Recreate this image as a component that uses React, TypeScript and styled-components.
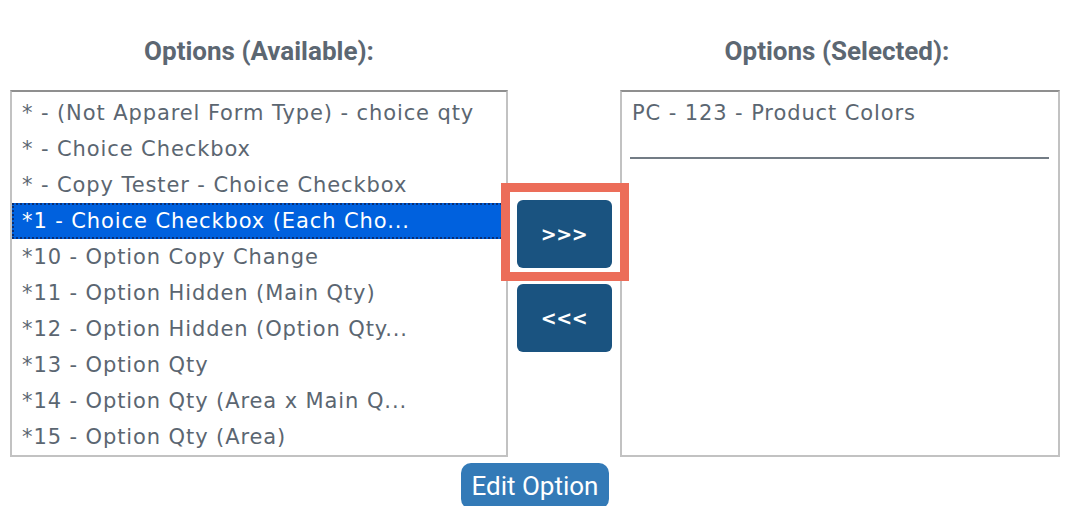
import React from "react";
import styled, { createGlobalStyle } from "styled-components";

const Global = createGlobalStyle`
  html, body { margin: 0; padding: 0; background: #ffffff; }
  body { font-family: "DejaVu Sans", Verdana, sans-serif; overflow: hidden; }
`;

const Page = styled.div`
  width: 1084px;
  height: 506px;
  padding-left: 10px;
  box-sizing: border-box;
  display: flex;
  flex-direction: column;
  align-items: flex-start;
`;

const Grid = styled.div`
  display: grid;
  grid-template-columns: 498px 112px 440px;
  grid-template-rows: auto auto;
`;

const Heading = styled.h3<{ $shift?: number }>`
  margin: 0;
  padding-top: 37px;
  height: 28px;
  margin-bottom: 25px;
  line-height: 28px;
  text-align: center;
  font-family: Roboto, "Liberation Sans", sans-serif;
  font-weight: 700;
  font-size: 26px;
  color: #5c6772;
  transform: translateX(${(p) => p.$shift ?? 0}px);
`;

const ListBox = styled.div`
  height: 367px;
  box-sizing: border-box;
  border: 2px solid #c2c2c2;
  border-top-color: #8f8f8f;
  padding: 3px 0 0 0;
  display: flex;
  flex-direction: column;
  overflow: hidden;
`;

const Option = styled.div<{ $selected?: boolean }>`
  height: 36px;
  line-height: 36px;
  padding-left: 10px;
  box-sizing: border-box;
  font-family: "DejaVu Sans", Verdana, sans-serif;
  font-size: 21px;
  letter-spacing: 0.9px;
  white-space: nowrap;
  color: ${(p) => (p.$selected ? "#ffffff" : "#5b6671")};
  background: ${(p) => (p.$selected ? "#0061de" : "transparent")};
  outline: ${(p) => (p.$selected ? "2px dotted #0a2f73" : "none")};
  outline-offset: -2px;
`;

const Separator = styled.div`
  margin: 26px 9px 0 8px;
  border-bottom: 2px solid #737c85;
`;

const Middle = styled.div`
  display: flex;
  flex-direction: column;
  align-items: center;
  gap: 16px;
  padding-top: 110px;
`;

const Highlight = styled.div`
  position: relative;
  &::before {
    content: "";
    position: absolute;
    left: -16px;
    right: -17px;
    top: -17px;
    bottom: -13px;
    border: 9px solid #ec6d59;
    pointer-events: none;
  }
`;

const MoveButton = styled.button`
  width: 95px;
  height: 68px;
  border: none;
  border-radius: 6px;
  background: #1a5380;
  color: #ffffff;
  font-family: "DejaVu Sans", Verdana, sans-serif;
  font-weight: 700;
  font-size: 19px;
  letter-spacing: -0.5px;
  padding: 0;
  cursor: pointer;
`;

const Footer = styled.div`
  width: 1050px;
  display: flex;
  justify-content: center;
  margin-top: 6px;
`;

const EditButton = styled.button`
  width: 148px;
  height: 46px;
  border: none;
  border-radius: 10px;
  background: #337ab7;
  color: #ffffff;
  font-family: Roboto, "Liberation Sans", sans-serif;
  font-size: 26px;
  padding: 0 0 0 0;
  cursor: pointer;
`;

const available = [
  "* - (Not Apparel Form Type) - choice qty",
  "* - Choice Checkbox",
  "* - Copy Tester - Choice Checkbox",
  "*1 - Choice Checkbox (Each Cho...",
  "*10 - Option Copy Change",
  "*11 - Option Hidden (Main Qty)",
  "*12 - Option Hidden (Option Qty...",
  "*13 - Option Qty",
  "*14 - Option Qty (Area x Main Q...",
  "*15 - Option Qty (Area)",
];

export default function App() {
  return (
    <>
      <Global />
      <Page>
        <Grid>
          <Heading>Options (Available):</Heading>
          <div />
          <Heading $shift={-3}>Options (Selected):</Heading>
          <ListBox>
            {available.map((t, i) => (
              <Option key={t} $selected={i === 3}>
                {t}
              </Option>
            ))}
          </ListBox>
          <Middle>
            <Highlight>
              <MoveButton>&gt;&gt;&gt;</MoveButton>
            </Highlight>
            <MoveButton>&lt;&lt;&lt;</MoveButton>
          </Middle>
          <ListBox>
            <Option>PC - 123 - Product Colors</Option>
            <Separator />
          </ListBox>
        </Grid>
        <Footer>
          <EditButton>Edit Option</EditButton>
        </Footer>
      </Page>
    </>
  );
}
